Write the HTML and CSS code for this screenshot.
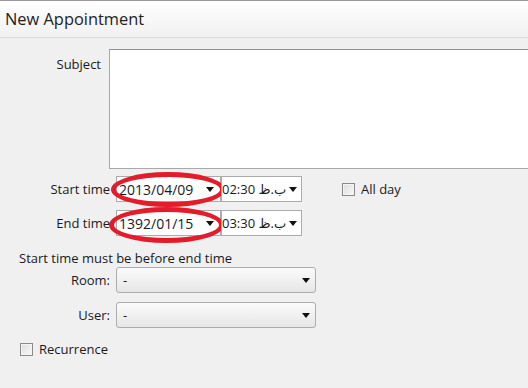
FILE: index.html
```html
<!doctype html>
<html>
    <head>
        <title>New Appointment</title>
        <link rel="stylesheet" href="styles.css">
    </head>
    <body>
        <div class="titlebar">New Appointment</div>
        <div class="form">
            <div class="row subject-row">
                <label class="label subject-label">Subject</label>
                <div class="subject-box"></div>
            </div>
            <div class="row time-row start-row">
                <label class="label time-label">Start time</label>
                <div class="picker date-picker">
                    <span>2013/04/09</span><span class="arrow"></span>
                    <div class="mark mark-start"></div>
                </div>
                <div class="picker time-picker">
                    <span class="time-text">02:30 <bdo dir="ltr">ظ.ب</bdo></span><span class="arrow"></span>
                </div>
                <div class="check allday">
                    <span class="box"></span><span>All day</span>
                </div>
            </div>
            <div class="row time-row end-row">
                <label class="label time-label">End time</label>
                <div class="picker date-picker">
                    <span>1392/01/15</span><span class="arrow"></span>
                    <div class="mark mark-end"></div>
                </div>
                <div class="picker time-picker">
                    <span class="time-text">03:30 <bdo dir="ltr">ظ.ب</bdo></span><span class="arrow"></span>
                </div>
            </div>
            <div class="error">Start time must be before end time</div>
            <div class="row combo-row">
                <label class="label combo-label">Room:</label>
                <div class="combo"><span>-</span><span class="arrow"></span></div>
            </div>
            <div class="row combo-row">
                <label class="label combo-label">User:</label>
                <div class="combo"><span>-</span><span class="arrow"></span></div>
            </div>
            <div class="check recurrence">
                <span class="box"></span><span>Recurrence</span>
            </div>
        </div>
    </body>
</html>
```

FILE: styles.css
```css
* {
    box-sizing: border-box;
}
body {
    margin: 0;
    overflow: hidden;
    background: #f0f0f0;
    color: #1a1a1a;
    font-family: "Open Sans", "DejaVu Sans", sans-serif;
    font-size: 13px;
}
.titlebar {
    height: 38px;
    padding-left: 5px;
    border-top: 1px solid #9a9a9a;
    border-bottom: 1px solid #dcdcdc;
    background: linear-gradient(#ffffff, #f1f1f1);
    font-size: 16.4px;
    line-height: 35px;
    color: #222;
}
.form {
    padding-top: 11px;
}
.row {
    display: flex;
    align-items: center;
}
.label {
    text-align: right;
    flex: none;
}
.subject-row {
    align-items: flex-start;
}
.subject-label {
    width: 101px;
    padding-top: 6px;
}
.subject-box {
    width: 440px;
    height: 120px;
    margin-left: 8px;
    flex: none;
    background: #fff;
    border: 1px solid #a8a8a8;
    border-top-color: #8e8e8e;
}
.time-row {
    height: 26px;
}
.start-row {
    margin-top: 7px;
}
.end-row {
    margin-top: 8px;
}
.time-label {
    width: 110px;
    margin-right: 6px;
}
.picker {
    position: relative;
    display: flex;
    align-items: center;
    justify-content: space-between;
    height: 26px;
    padding: 0 6px 0 2px;
    background: #fff;
    border: 1px solid #ababab;
    font-size: 14px;
}
.date-picker {
    width: 105px;
}
.time-picker {
    width: 81px;
    padding-left: 0;
    padding-right: 4px;
}
.time-text {
    white-space: nowrap;
    font-size: 13px;
}
.arrow {
    flex: none;
    width: 0;
    height: 0;
    border-left: 4px solid transparent;
    border-right: 4px solid transparent;
    border-top: 5px solid #111;
}
.mark {
    position: absolute;
    border: 5px solid #e31b2b;
    border-radius: 50%;
}
.mark-start {
    left: -6px;
    top: -5px;
    width: 114px;
    height: 35px;
}
.mark-end {
    left: -8px;
    top: -4px;
    width: 115px;
    height: 36px;
}
.check {
    display: flex;
    align-items: center;
    gap: 6px;
}
.box {
    width: 13px;
    height: 13px;
    border: 1px solid #8a8a8a;
    background: linear-gradient(135deg, #dcdcdc, #fafafa);
    box-shadow: inset 0 0 0 1px #f4f4f4;
}
.allday {
    margin-left: 40px;
}
.error {
    margin-top: 14px;
    padding-left: 19px;
    line-height: 17px;
}
.combo-row {
    height: 26px;
}
.combo-row + .combo-row {
    margin-top: 9px;
}
.combo-label {
    width: 110px;
    margin-right: 6px;
}
.combo {
    display: flex;
    align-items: center;
    justify-content: space-between;
    width: 200px;
    height: 26px;
    padding: 0 5px 0 6px;
    border: 1px solid #acacac;
    border-radius: 3px;
    background: linear-gradient(#fbfbfb, #e6e6e6);
}
.recurrence {
    margin-top: 12px;
    padding-left: 20px;
}
```
